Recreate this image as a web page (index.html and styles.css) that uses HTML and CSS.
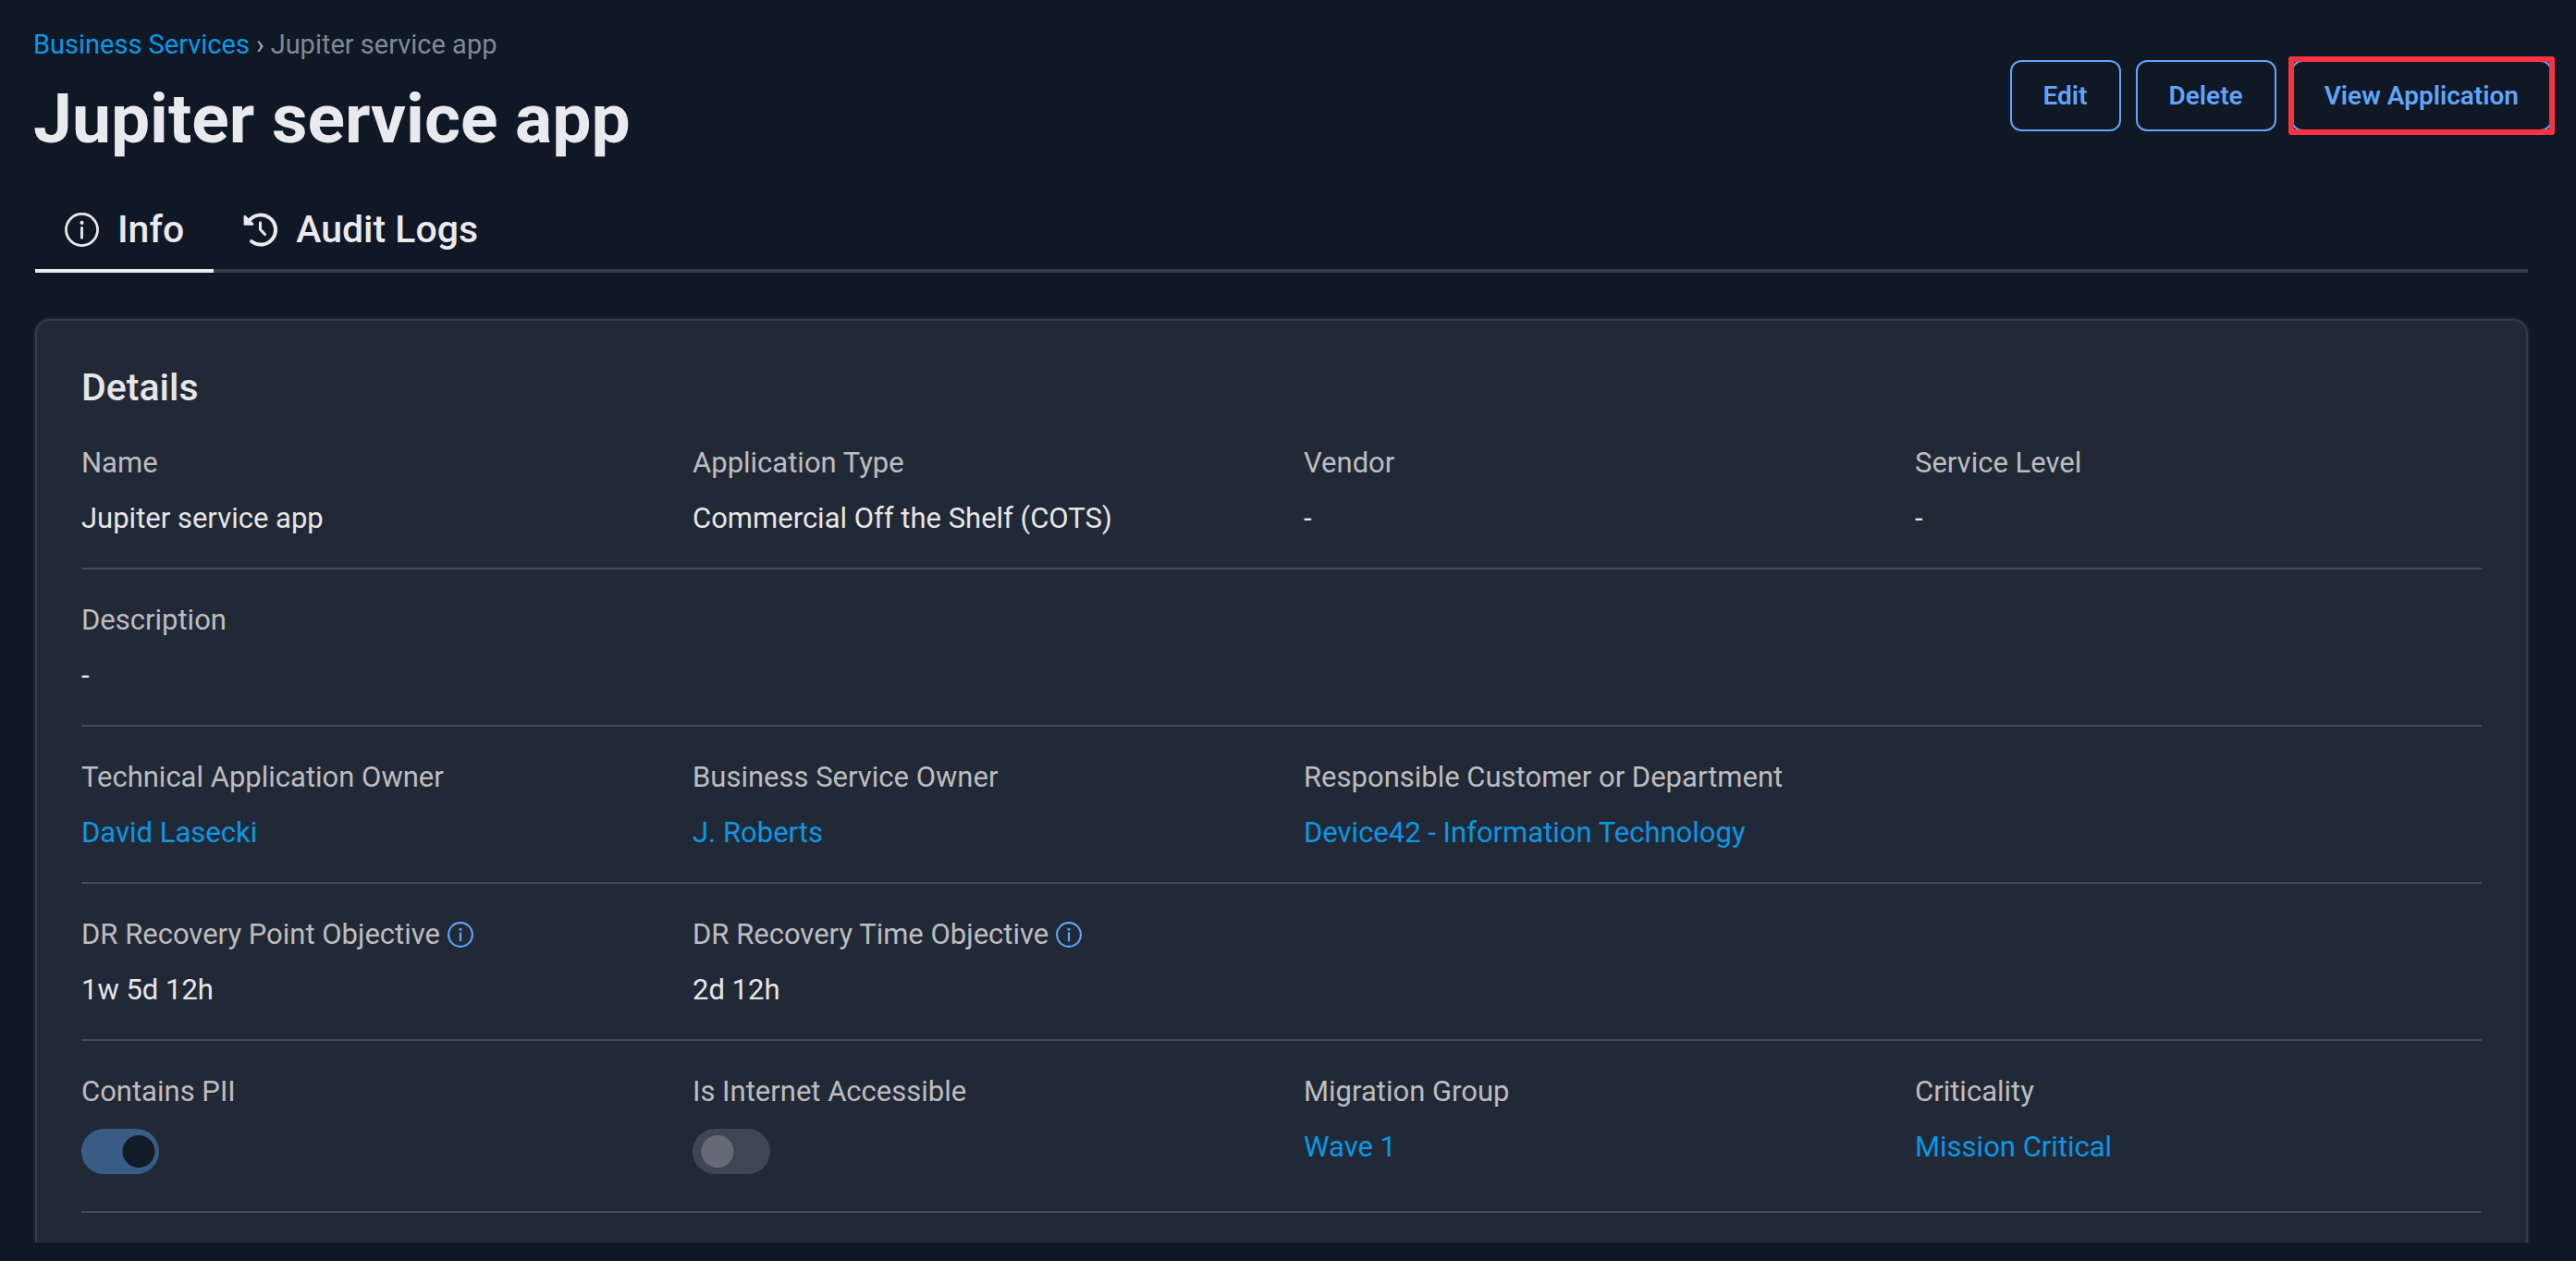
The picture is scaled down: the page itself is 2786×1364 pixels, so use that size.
FILE: index.html
```
<!DOCTYPE html>
<html lang="en">
<head>
  <meta charset="utf-8">
  <meta name="viewport" content="width=device-width, initial-scale=1">
  <title>Jupiter service app</title>
  <link rel="stylesheet" href="styles.css">
</head>
<body>
  <svg class="sprite" aria-hidden="true">
    <symbol id="icon-info" viewBox="0 0 36 36">
      <circle cx="18" cy="18" r="16.6" fill="none" stroke="currentColor" stroke-width="2.7"/>
      <circle cx="18" cy="10.6" r="2" fill="currentColor"/>
      <path d="M18 16v10.4" fill="none" stroke="currentColor" stroke-width="2.8" stroke-linecap="round"/>
    </symbol>
    <symbol id="icon-history" viewBox="0 0 37 37">
      <path d="M5.5 10A16 16 0 1 1 9 31" fill="none" stroke="currentColor" stroke-width="4" stroke-linecap="round"/>
      <path d="M.9 3.2Q2 2.2 3 3.4L11 11.4Q12 13.6 10 13.8H1.6Q.6 13.8.6 12.6V4Z" fill="currentColor"/>
      <path d="M18.5 10.8v7.4l5 5.4" fill="none" stroke="currentColor" stroke-width="3" stroke-linecap="round" stroke-linejoin="round"/>
    </symbol>
  </svg>

  <div class="page">
    <header class="header">
      <div>
        <nav class="breadcrumb" aria-label="Breadcrumb">
          <a class="link" href="#services">Business Services</a>
          <span class="breadcrumb-separator">›</span>
          <span>Jupiter service app</span>
        </nav>
        <h1 class="title">Jupiter service app</h1>
      </div>
      <div class="actions">
        <button class="button" type="button">Edit</button>
        <button class="button" type="button">Delete</button>
        <button class="button button-highlighted" type="button">View Application</button>
      </div>
    </header>

    <main class="content">
      <div class="tabs" role="tablist">
        <button class="tab tab-active" type="button" role="tab" aria-selected="true">
          <svg class="tab-icon" aria-hidden="true"><use href="#icon-info"/></svg>Info
        </button>
        <button class="tab" type="button" role="tab" aria-selected="false">
          <svg class="tab-icon" aria-hidden="true"><use href="#icon-history"/></svg>Audit Logs
        </button>
      </div>

      <section class="card">
        <h2 class="card-title">Details</h2>
        <dl class="row">
          <div class="field"><dt>Name</dt><dd>Jupiter service app</dd></div>
          <div class="field"><dt>Application Type</dt><dd>Commercial Off the Shelf (COTS)</dd></div>
          <div class="field"><dt>Vendor</dt><dd>-</dd></div>
          <div class="field"><dt>Service Level</dt><dd>-</dd></div>
        </dl>
        <dl class="row">
          <div class="field"><dt>Description</dt><dd>-</dd></div>
        </dl>
        <dl class="row">
          <div class="field"><dt>Technical Application Owner</dt><dd><a class="link" href="#owner">David Lasecki</a></dd></div>
          <div class="field"><dt>Business Service Owner</dt><dd><a class="link" href="#business-owner">J. Roberts</a></dd></div>
          <div class="field"><dt>Responsible Customer or Department</dt><dd><a class="link" href="#department">Device42 - Information Technology</a></dd></div>
        </dl>
        <dl class="row">
          <div class="field"><dt>DR Recovery Point Objective <svg class="help-icon" aria-hidden="true"><use href="#icon-info"/></svg></dt><dd>1w 5d 12h</dd></div>
          <div class="field"><dt>DR Recovery Time Objective <svg class="help-icon" aria-hidden="true"><use href="#icon-info"/></svg></dt><dd>2d 12h</dd></div>
        </dl>
        <dl class="row row-switches">
          <div class="field"><dt><label for="pii">Contains PII</label></dt><dd><input class="switch" id="pii" type="checkbox" checked disabled></dd></div>
          <div class="field"><dt><label for="internet">Is Internet Accessible</label></dt><dd><input class="switch" id="internet" type="checkbox" disabled></dd></div>
          <div class="field"><dt>Migration Group</dt><dd><a class="link" href="#wave">Wave 1</a></dd></div>
          <div class="field"><dt>Criticality</dt><dd><a class="link" href="#criticality">Mission Critical</a></dd></div>
        </dl>
      </section>
    </main>
  </div>
</body>
</html>
```
FILE: styles.css
```
* {
  box-sizing: border-box;
}

body {
  margin: 0;
  background: #101725;
  color: #e6e6e6;
  font-family: Roboto, "Liberation Sans", sans-serif;
}

.sprite {
  display: none;
}

.page {
  height: calc(100vh - 20px);
  padding-top: 30px;
  overflow-y: auto;
  scrollbar-width: none;
}

.link {
  color: #0a97e4;
  text-decoration: none;
}

/* Header */

.header {
  display: flex;
  align-items: flex-start;
  justify-content: space-between;
  padding: 0 26px 0 36px;
}

.breadcrumb {
  display: flex;
  gap: 7px;
  color: #7d8b93;
  font-size: 29px;
  line-height: 36px;
}

.breadcrumb-separator {
  color: #a9b1b8;
}

.title {
  margin: 18px 0 0;
  color: #e9eaee;
  font-size: 75px;
  font-weight: 700;
  line-height: 88px;
}

.actions {
  display: flex;
  gap: 16px;
  padding-top: 35px;
}

.button {
  position: relative;
  height: 77px;
  padding: 0 34px;
  border: 2px solid #60a5fa;
  border-radius: 12px;
  background: transparent;
  color: #60a5fa;
  font: 600 28px/36px Roboto, "Liberation Sans", sans-serif;
}

.button-highlighted::after {
  position: absolute;
  inset: -6px -5px;
  border: 6px solid #fb3341;
  border-radius: 3px;
  content: "";
}

/* Tabs */

.content {
  padding: 52px 52px 0 38px;
}

.tabs {
  display: flex;
  border-bottom: 4px solid #383c4a;
}

.tab {
  display: flex;
  align-items: center;
  gap: 20px;
  margin-bottom: -4px;
  padding: 0 32px 19px;
  border: 0;
  border-bottom: 4px solid transparent;
  background: transparent;
  color: #e9eaee;
  font: 500 41px/48px Roboto, "Liberation Sans", sans-serif;
}

.tab-active {
  border-bottom-color: #e9eaee;
}

.tab-icon {
  width: 37px;
  height: 37px;
}

/* Details card */

.card {
  margin-top: 50px;
  padding: 48px;
  border: 2px solid #353b47;
  border-radius: 16px;
  background: #212937;
  box-shadow: 0 0 0 2px #1c2330;
}

.card-title {
  margin: 0 0 38px;
  color: #e6e6e6;
  font-size: 41px;
  font-weight: 500;
  line-height: 48px;
}

.row {
  display: grid;
  grid-template-columns: repeat(4, 1fr);
  column-gap: 48px;
  margin: 0;
  padding: 35px 0 33px;
  border-bottom: 2px solid #424a5a;
  font-size: 31px;
  line-height: 40px;
}

.card-title + .row {
  padding-top: 0;
}

.field {
  display: flex;
  flex-direction: column;
  gap: 20px;
  white-space: nowrap;
}

.field dt {
  display: flex;
  align-items: center;
  gap: 8px;
  color: #bdbdbf;
}

.field dd {
  margin: 0;
  font-weight: 450;
}

.help-icon {
  width: 28px;
  height: 28px;
  color: #60a5fa;
}

.row-switches {
  padding-bottom: 40px;
}

.switch {
  display: block;
  width: 84px;
  height: 49px;
  margin: 0;
  border-radius: 25px;
  appearance: none;
  background: radial-gradient(circle 18px at 27px 50%, #646b76 17px, transparent 18px) #3d4652;
}

.switch:checked {
  background: radial-gradient(circle 18px at 62px 50%, #121c28 17px, transparent 18px) #385c86;
}
```
